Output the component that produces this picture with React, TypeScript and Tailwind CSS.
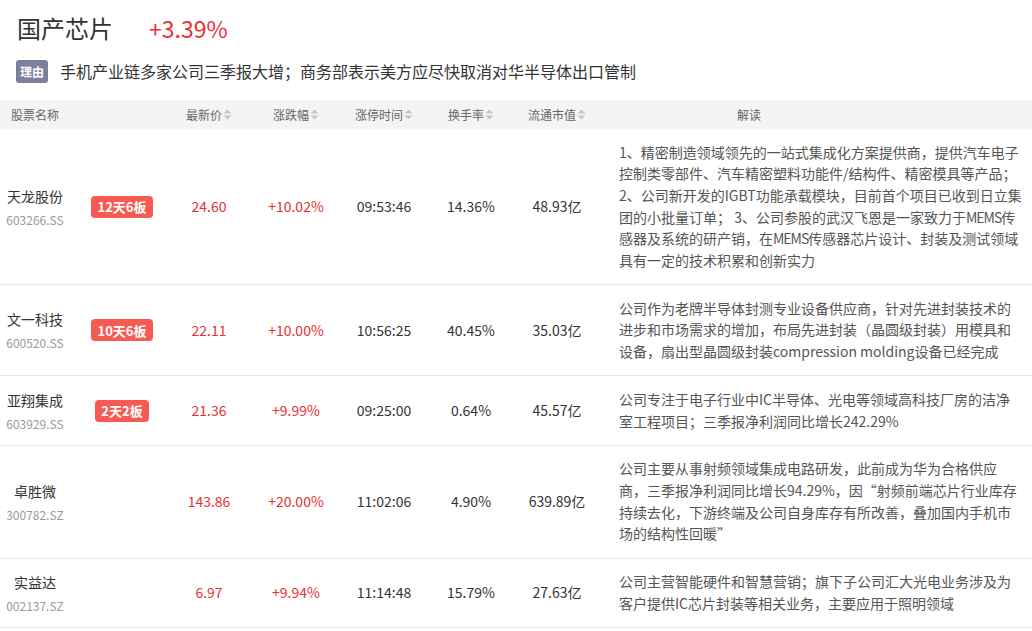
import React from 'react';

const FONT = { fontFamily: '"Noto Sans CJK SC", "Noto Sans", sans-serif' };

type Row = {
  name: string;
  code: string;
  badge?: string;
  price: string;
  change: string;
  time: string;
  turnover: string;
  cap: string;
  desc: React.ReactNode;
};

// latin runs in the reference font are a bit narrower
const Mems = () => <span className="tracking-[-1px]">MEMS</span>;

const ROWS: Row[] = [
  {
    name: '天龙股份',
    code: '603266.SS',
    badge: '12天6板',
    price: '24.60',
    change: '+10.02%',
    time: '09:53:46',
    turnover: '14.36%',
    cap: '48.93亿',
    desc: (
      <>
        1、精密制造领域领先的一站式集成化方案提供商，提供汽车电子控制类零部件、汽车精密塑料功能件/结构件、精密模具等产品；2、公司新开发的IGBT功能承载模块，目前首个项目已收到日立集团的小批量订单；
        3、公司参股的武汉飞恩是一家致力于<Mems />传感器及系统的研产销，在<Mems />传感器芯片设计、封装及测试领域具有一定的技术积累和创新实力
      </>
    ),
  },
  {
    name: '文一科技',
    code: '600520.SS',
    badge: '10天6板',
    price: '22.11',
    change: '+10.00%',
    time: '10:56:25',
    turnover: '40.45%',
    cap: '35.03亿',
    desc: '公司作为老牌半导体封测专业设备供应商，针对先进封装技术的进步和市场需求的增加，布局先进封装（晶圆级封装）用模具和设备，扇出型晶圆级封装compression molding设备已经完成',
  },
  {
    name: '亚翔集成',
    code: '603929.SS',
    badge: '2天2板',
    price: '21.36',
    change: '+9.99%',
    time: '09:25:00',
    turnover: '0.64%',
    cap: '45.57亿',
    desc: '公司专注于电子行业中IC半导体、光电等领域高科技厂房的洁净室工程项目；三季报净利润同比增长242.29%',
  },
  {
    name: '卓胜微',
    code: '300782.SZ',
    price: '143.86',
    change: '+20.00%',
    time: '11:02:06',
    turnover: '4.90%',
    cap: '639.89亿',
    desc: '公司主要从事射频领域集成电路研发，此前成为华为合格供应商，三季报净利润同比增长94.29%，因“射频前端芯片行业库存持续去化，下游终端及公司自身库存有所改善，叠加国内手机市场的结构性回暖”',
  },
  {
    name: '实益达',
    code: '002137.SZ',
    price: '6.97',
    change: '+9.94%',
    time: '11:14:48',
    turnover: '15.79%',
    cap: '27.63亿',
    desc: '公司主营智能硬件和智慧营销；旗下子公司汇大光电业务涉及为客户提供IC芯片封装等相关业务，主要应用于照明领域',
  },
];

const COLS = 'grid grid-cols-[70px_104px_70px_104px_72px_102px_70px_1fr]';

function SortIcon() {
  return (
    <svg width="9" height="11" viewBox="0 0 9 11" className="ml-px shrink-0">
      <path d="M4.5 0.5 L8.5 4.5 L0.5 4.5 Z" fill="#c3c6cc" />
      <path d="M0.5 6.5 L8.5 6.5 L4.5 10.5 Z" fill="#c3c6cc" />
    </svg>
  );
}

function HeadCell({ label, sort }: { label: string; sort?: boolean }) {
  return (
    <div className="flex items-center justify-center">
      <span>{label}</span>
      {sort && <SortIcon />}
    </div>
  );
}

export default function App() {
  return (
    <div className="w-[1032px] h-[631px] overflow-hidden bg-white" style={FONT}>
      {/* Title */}
      <div className="flex items-center pt-[12px] pl-[17px] h-[44px]">
        <span className="text-[24px] leading-[32px] text-[#333]">国产芯片</span>
        <span className="ml-[36px] text-[23px] leading-[32px] text-[#e93030]">+3.39%</span>
      </div>

      {/* Reason */}
      <div className="flex items-center mt-[16px] pl-[16px] h-[23px]">
        <span className="flex items-center justify-center w-[32px] h-[23px] rounded-[3px] bg-[#7b809b] text-white text-[12px] font-bold">
          理由
        </span>
        <span className="ml-[12px] text-[16px] leading-[23px] text-[#333]">
          手机产业链多家公司三季报大增；商务部表示美方应尽快取消对华半导体出口管制
        </span>
      </div>

      {/* Table header */}
      <div className={`${COLS} mt-[17px] h-[29px] items-center bg-[#f4f4f4] text-[12px] text-[#666]`}>
        <HeadCell label="股票名称" />
        <div />
        <HeadCell label="最新价" sort />
        <HeadCell label="涨跌幅" sort />
        <HeadCell label="涨停时间" sort />
        <HeadCell label="换手率" sort />
        <HeadCell label="流通市值" sort />
        <div className="pl-[145px]">解读</div>
      </div>

      {/* Rows */}
      {ROWS.map((r) => (
        <div key={r.code} className={`${COLS} items-center border-b border-[#e8e8e8]`}>
          <div className="flex flex-col items-center">
            <span className="text-[14px] leading-[22px] text-[#333]">{r.name}</span>
            <span className="mt-[4px] text-[12px] leading-[18px] text-[#999]">{r.code}</span>
          </div>
          <div className="flex justify-center">
            {r.badge && (
              <span className="flex items-center h-[22px] px-[6px] rounded-[4px] bg-[#f65a53] text-white text-[13px] font-bold">
                {r.badge}
              </span>
            )}
          </div>
          <div className="text-center text-[14px] text-[#e93030]">{r.price}</div>
          <div className="text-center text-[14px] text-[#e93030]">{r.change}</div>
          <div className="text-center text-[14px] text-[#333]">{r.time}</div>
          <div className="text-center text-[14px] text-[#333]">{r.turnover}</div>
          <div className="text-center text-[14px] text-[#333]">{r.cap}</div>
          <div className="pl-[27px] py-[12.5px]">
            <p className="w-[405px] text-[14px] leading-[21.7px] text-[#555]">{r.desc}</p>
          </div>
        </div>
      ))}
    </div>
  );
}
